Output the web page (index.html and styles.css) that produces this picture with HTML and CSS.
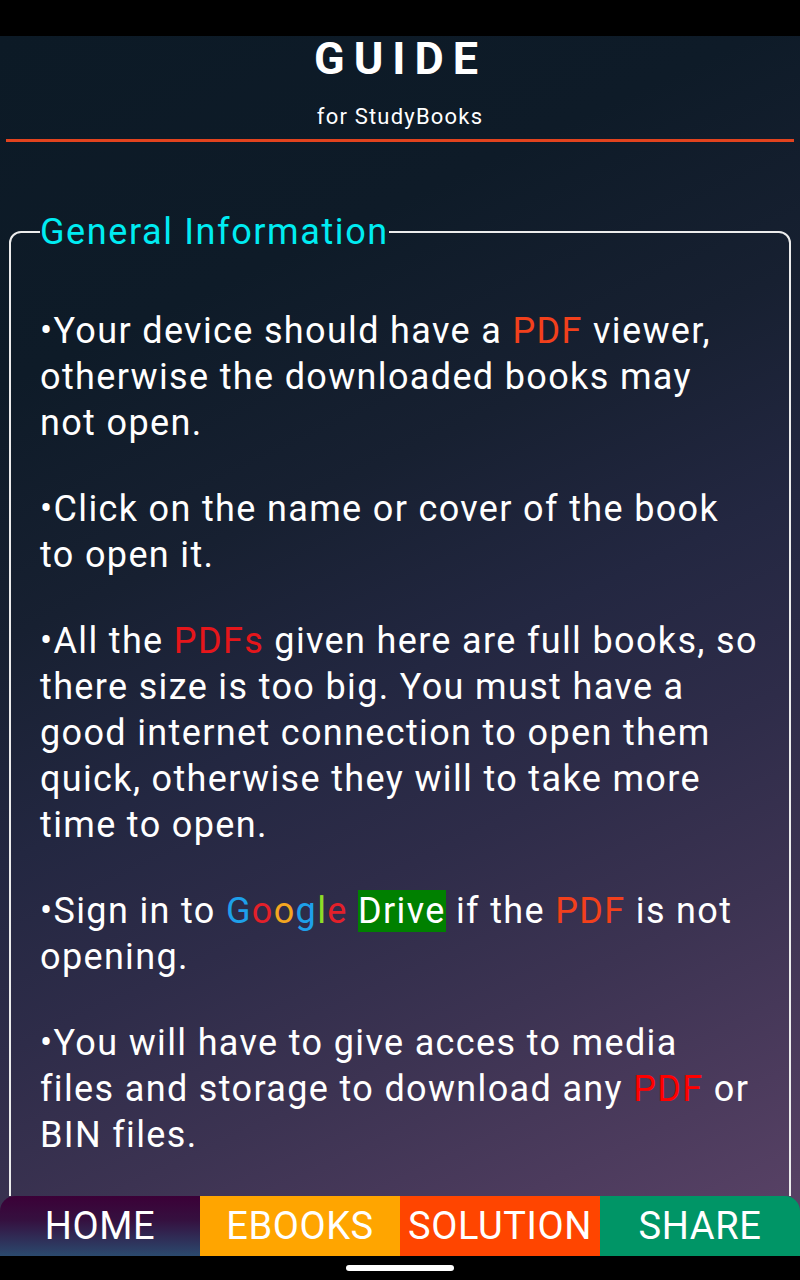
FILE: index.html
```html
<!DOCTYPE html>
<html lang="en">
<head>
<meta charset="utf-8">
<title>Guide</title>
<link rel="stylesheet" href="styles.css">
</head>
<body>
<div class="screen">
  <div class="status-bar"></div>
  <div class="app">
    <div class="main">
      <header class="header">
        <h1 class="title">GUIDE</h1>
        <p class="subtitle">for StudyBooks</p>
        <div class="rule"></div>
      </header>
      <fieldset class="info">
        <legend class="info-legend">General Information</legend>
        <p class="item">•Your device should have a <span class="pdf-orange">PDF</span> viewer, otherwise the downloaded books may not&nbsp;open.</p>
        <p class="item">•Click on the name or cover of the book to open it.</p>
        <p class="item">•All the <span class="pdf-red">PDFs</span> given here are full books, so there size is too big. You must have a good internet connection to open them quick, otherwise they will to take more time to open.</p>
        <p class="item">•Sign in to <span class="g-blue">G</span><span class="g-red">o</span><span class="g-yellow">o</span><span class="g-blue">g</span><span class="g-green">l</span><span class="g-red">e</span> <span class="drive">Drive</span> if the <span class="pdf-orange">PDF</span> is not opening.</p>
        <p class="item">•You will have to give acces to media files and storage to download any <span class="pdf-pure">PDF</span> or BIN files.</p>
      </fieldset>
    </div>
    <nav class="nav">
      <div class="nav-item nav-home">HOME</div>
      <div class="nav-item nav-ebooks">EBOOKS</div>
      <div class="nav-item nav-solution">SOLUTION</div>
      <div class="nav-item nav-share">SHARE</div>
    </nav>
  </div>
  <div class="gesture-bar"><div class="pill"></div></div>
</div>
</body>
</html>
```
FILE: styles.css
```css
html, body {
  margin: 0;
  padding: 0;
  background: #000;
}

.screen {
  width: 800px;
  height: 1280px;
  display: flex;
  flex-direction: column;
  font-family: Roboto, "Liberation Sans", sans-serif;
  color: #fff;
}

.status-bar {
  height: 36px;
  background: #000;
  flex: none;
}

.app {
  height: 1220px;
  display: flex;
  flex-direction: column;
  background: linear-gradient(155deg, #0c1a26 0%, #0e1b28 22%, #172031 38%, #232741 52%, #2e2c49 64%, #3c3352 76%, #4c3b5d 88%, #5c4468 100%);
  overflow: hidden;
}

.main {
  flex: 1;
  overflow: hidden;
  min-height: 0;
}

.header {
  text-align: center;
}

.title {
  margin: 0;
  font-size: 45px;
  line-height: 46px;
  font-weight: 700;
  letter-spacing: 9px;
  padding-left: 1px;
}

.subtitle {
  margin: 22px 0 0;
  font-size: 22px;
  line-height: 26px;
  letter-spacing: 1.2px;
}

.rule {
  height: 3px;
  margin: 9px 6px 0;
  background: #e2431e;
}

.info {
  margin: 69px 9px 0;
  padding: 55px 29px 40px;
  border: 2px solid #ececec;
  border-radius: 12px;
  min-width: 0;
}

.info-legend {
  padding: 0;
  font-size: 36px;
  line-height: 42px;
  letter-spacing: 1.6px;
  color: #00ecf2;
}

.item {
  margin: 0 0 40px;
  font-size: 36px;
  line-height: 46px;
  letter-spacing: 1.35px;
}

.pdf-orange { color: #f2401c; }
.pdf-red { color: #e5161b; }
.pdf-pure { color: #ff0000; }

.g-blue { color: #1ea0ea; }
.g-red { color: #e3202a; }
.g-yellow { color: #f4a620; }
.g-green { color: #8fdc26; }

.drive {
  background: #008000;
  color: #fff;
}

.nav {
  height: 60px;
  flex: none;
  display: flex;
}

.nav-item {
  flex: 1;
  display: flex;
  align-items: center;
  justify-content: center;
  font-size: 38px;
  letter-spacing: 0.6px;
  color: #fff;
}

.nav-home {
  background: linear-gradient(to bottom, #3b0037 0%, #35103f 40%, #2d3b62 85%, #2b4a6e 100%);
  border-top-left-radius: 15px;
}

.nav-ebooks { background: #ffa500; }
.nav-solution { background: #ff4500; }

.nav-share {
  background: #009566;
  border-top-right-radius: 15px;
}

.gesture-bar {
  height: 24px;
  flex: none;
  display: flex;
  justify-content: center;
  align-items: center;
  background: #000;
}

.pill {
  width: 108px;
  height: 6px;
  border-radius: 3px;
  background: #fff;
}
```
